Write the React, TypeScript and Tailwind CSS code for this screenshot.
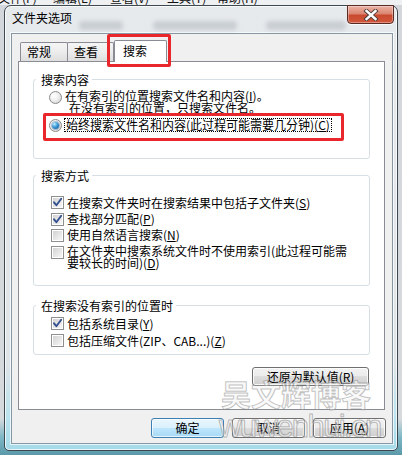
import React from "react";

const FONT = "font-['Noto_Sans_CJK_SC','Noto_Sans_CJK_JP',sans-serif]";

function Radio({ checked }: { checked?: boolean }) {
  return (
    <div className="w-[13px] h-[13px] shrink-0 rounded-full border border-[#8a8a8a] bg-[radial-gradient(circle_at_35%_35%,#ffffff_0%,#f2f2f2_40%,#cdcdcd_100%)] flex items-center justify-center">
      {checked && (
        <div className="w-[7px] h-[7px] rounded-full bg-[radial-gradient(circle_at_35%_30%,#c4f0ff_0%,#3a9ad9_45%,#0b4a88_100%)] shadow-[0_0_0_1px_rgba(30,80,140,0.35)]" />
      )}
    </div>
  );
}

function Check({ checked }: { checked?: boolean }) {
  return (
    <div className="relative w-[13px] h-[13px] shrink-0 border border-[#8e8f8f] bg-white p-px">
      <div className="w-full h-full bg-gradient-to-br from-[#d2d2d2] to-[#f7f7f7]" />
      {checked && (
        <svg className="absolute left-[-1px] top-[-1px]" width="13" height="13" viewBox="0 0 13 13">
          <path d="M3 6.3 L5.4 9.2 L10.2 2.8" fill="none" stroke="#34518f" strokeWidth="1.9" strokeLinejoin="round" strokeLinecap="round" />
        </svg>
      )}
    </div>
  );
}

function U({ c }: { c: string }) {
  return <span className="underline underline-offset-[1px]">{c}</span>;
}

export default function App() {
  return (
    <div className={`relative w-[402px] h-[455px] overflow-hidden ${FONT} text-[12px] text-black bg-[linear-gradient(to_bottom,#d3d7db_0%,#d6dadd_92%,#7fb8c6_96%,#5b99aa_100%)] flex flex-col`}>
      {/* menu bar strip behind */}
      <div className="h-[5px] overflow-hidden bg-[#eef0f2] shrink-0">
        <div className="flex -mt-[9px] leading-[14px] text-[12px] text-[#111]">
          <span className="ml-[-2px] w-[55px]">文件(F)</span>
          <span className="w-[57px]">编辑(E)</span>
          <span className="w-[57px]">查看(V)</span>
          <span className="w-[50px]">工具(T)</span>
          <span>帮助(H)</span>
        </div>
      </div>

      {/* window frame */}
      <div className="ml-[4px] w-[394px] h-[446px] shrink-0 rounded-t-[7px] rounded-b-[5px] border border-[#3e4851] bg-[linear-gradient(to_bottom,#e7eaed_0%,#e2e6e9_55%,#dfe4e7_80%,#b9e3ee_93%,#a6dbe9_100%)] shadow-[inset_0_0_0_1px_rgba(255,255,255,0.75)] flex flex-col">
        {/* title bar */}
        <div className="relative h-[27px] shrink-0 flex items-start">
          <div className="absolute left-[74px] top-[15px] w-[44px] h-[9px] rounded bg-[#9ea6ad]/40 blur-[2px]" />
          <div className="absolute left-[148px] top-[15px] w-[84px] h-[9px] rounded bg-[#9ea6ad]/40 blur-[2px]" />
          <div className="absolute left-[261px] top-[15px] w-[80px] h-[9px] rounded bg-[#9ea6ad]/40 blur-[2px]" />
          <div className="relative pl-[7px] pt-[4px] leading-[16px] text-[12px]">文件夹选项</div>
          <div className="flex-1" />
          <div className="relative -mt-px mr-[3px] w-[47px] h-[19px] rounded-b-[4px] border border-[#5b2a22] bg-[linear-gradient(to_bottom,#eab3a6_0%,#dc8670_45%,#c94a30_55%,#d2583b_100%)] shadow-[inset_0_0_0_1px_rgba(255,255,255,0.35),0_1px_0_rgba(255,255,255,0.8)] flex items-center justify-center">
            <svg width="16" height="12" viewBox="0 0 16 12">
              <path d="M3.5 2 L12.5 10 M12.5 2 L3.5 10" stroke="#4a3a3a" strokeWidth="4.2" strokeLinecap="square" />
              <path d="M3.5 2 L12.5 10 M12.5 2 L3.5 10" stroke="#ffffff" strokeWidth="2.4" strokeLinecap="square" />
            </svg>
          </div>
        </div>

        {/* client area */}
        <div className="ml-[6px] w-[382px] h-[411px] shrink-0 border border-[#8797a3] bg-[#f0f0f0] shadow-[0_0_0_1px_rgba(255,255,255,0.7)] flex flex-col">
          {/* tabs */}
          <div className="mt-[6px] ml-[8px] h-[21px] flex items-end shrink-0">
            <div className="w-[48px] h-[19px] border border-b-0 border-[#898c95] rounded-t-[2px] bg-[linear-gradient(to_bottom,#f5f5f5_0%,#ececec_50%,#dedede_100%)] pl-[6px] leading-[18px]">常规</div>
            <div className="ml-[-1px] w-[47px] h-[19px] border border-b-0 border-[#898c95] rounded-t-[2px] bg-[linear-gradient(to_bottom,#f5f5f5_0%,#ececec_50%,#dedede_100%)] pl-[6px] leading-[18px]">查看</div>
            <div className="relative z-10 mb-[-1px] w-[53px] h-[22px] border border-b-0 border-[#898c95] rounded-t-[2px] bg-white pl-[8px] leading-[20px]">
              搜索
              <div className="absolute left-[-8px] top-[-7px] w-[64px] h-[33px] border-[3px] border-[#e8262c] rounded-[2px]" />
            </div>
          </div>

          {/* panel */}
          <div className="ml-[6px] w-[367px] h-[349px] shrink-0 border border-[#898c95] bg-white px-[14px] flex flex-col">
            {/* group 1 */}
            <div className="mt-[17px] h-[80px] shrink-0 border border-[#d5dfe5] rounded-[3px] flex flex-col">
              <div className="-mt-[7px] ml-[2px] w-fit bg-white pl-[5px] pr-[3px] leading-[13px]">搜索内容</div>
              <div className="mt-[4px] pl-[15px] flex items-start">
                <div className="mt-[1px]"><Radio /></div>
                <div className="ml-[3px] leading-[12px]">
                  <div>在有索引的位置搜索文件名和内容(<U c="I" />)。</div>
                  <div className="pl-[4px]">在没有索引的位置，只搜索文件名。</div>
                </div>
              </div>
              <div className="relative mt-[4px] ml-[15px] h-[14px] flex items-center">
                <Radio checked />
                <div className="ml-[2px] border border-dotted border-black px-px leading-[12px]">始终搜索文件名和内容(此过程可能需要几分钟)(<U c="C" />)</div>
                <div className="absolute left-[-6px] top-[-5px] w-[301px] h-[28px] border-[3px] border-[#e8262c] rounded-[2px]" />
              </div>
            </div>

            {/* group 2 */}
            <div className="mt-[16px] h-[111px] shrink-0 border border-[#d5dfe5] rounded-[3px] flex flex-col">
              <div className="-mt-[7px] ml-[2px] w-fit bg-white pl-[5px] pr-[3px] leading-[13px]">搜索方式</div>
              <div className="mt-[12px] pl-[17px] h-[17px] flex items-center">
                <Check checked />
                <span className="ml-[3px]">在搜索文件夹时在搜索结果中包括子文件夹(<U c="S" />)</span>
              </div>
              <div className="pl-[17px] h-[16px] flex items-center">
                <Check checked />
                <span className="ml-[3px]">查找部分匹配(<U c="P" />)</span>
              </div>
              <div className="pl-[17px] h-[16px] flex items-center">
                <Check />
                <span className="ml-[3px]">使用自然语言搜索(<U c="N" />)</span>
              </div>
              <div className="pl-[17px] pt-[2px] flex items-start">
                <div className="mt-[1px]"><Check /></div>
                <div className="ml-[3px] leading-[12px]">
                  在文件夹中搜索系统文件时不使用索引(此过程可能需<br />要较长的时间)(<U c="D" />)
                </div>
              </div>
            </div>

            {/* group 3 */}
            <div className="mt-[19px] h-[50px] shrink-0 border border-[#d5dfe5] rounded-[3px] flex flex-col">
              <div className="-mt-[7px] ml-[2px] w-fit bg-white pl-[5px] pr-[3px] leading-[13px]">在搜索没有索引的位置时</div>
              <div className="mt-[3px] pl-[17px] h-[17px] flex items-center">
                <Check checked />
                <span className="ml-[3px]">包括系统目录(<U c="Y" />)</span>
              </div>
              <div className="pl-[17px] h-[17px] flex items-center">
                <Check />
                <span className="ml-[3px]">包括压缩文件(ZIP、CAB...)(<U c="Z" />)</span>
              </div>
            </div>

            <div className="mt-[12px] flex justify-end pr-px">
              <div className="w-[117px] h-[19px] rounded-[3px] border border-[#707070] bg-[linear-gradient(to_bottom,#f2f2f2_0%,#ebebeb_50%,#dddddd_50%,#cfcfcf_100%)] shadow-[inset_0_0_0_1px_rgba(255,255,255,0.8)] flex items-center justify-center leading-[14px]">
                还原为默认值(<U c="R" />)
              </div>
            </div>
          </div>

          {/* bottom buttons */}
          <div className="mt-[8px] pr-[6px] flex justify-end gap-[8px] shrink-0">
            <div className="w-[73px] h-[20px] rounded-[3px] border border-[#3c7fb1] bg-[linear-gradient(to_bottom,#eaf6fd_0%,#d9f0fc_50%,#bee6fd_50%,#a7d9f5_100%)] shadow-[inset_0_0_0_1px_rgba(255,255,255,0.7)] flex items-center justify-center leading-[14px]">确定</div>
            <div className="w-[73px] h-[20px] rounded-[3px] border border-[#707070] bg-[linear-gradient(to_bottom,#f2f2f2_0%,#ebebeb_50%,#dddddd_50%,#cfcfcf_100%)] shadow-[inset_0_0_0_1px_rgba(255,255,255,0.8)] flex items-center justify-center leading-[14px]">取消</div>
            <div className="w-[73px] h-[20px] rounded-[3px] border border-[#707070] bg-[linear-gradient(to_bottom,#f2f2f2_0%,#ebebeb_50%,#dddddd_50%,#cfcfcf_100%)] shadow-[inset_0_0_0_1px_rgba(255,255,255,0.8)] flex items-center justify-center leading-[14px]">应用(<U c="A" />)</div>
          </div>
        </div>
      </div>

      {/* watermark */}
      <div className="absolute left-[221px] top-[377px] z-20 pointer-events-none text-[30px] leading-[32px] font-bold text-[rgba(245,245,245,0.55)] [-webkit-text-stroke:1px_rgba(120,120,120,0.45)]">
        吴文辉博客
      </div>
      <div className="absolute left-[219px] top-[411px] z-20 pointer-events-none font-['Liberation_Sans',sans-serif] text-[31px] leading-[32px] tracking-[-1.6px] text-[rgba(245,245,245,0.5)] [-webkit-text-stroke:1px_rgba(110,110,110,0.45)]">
        wuwenhui.cn
      </div>
    </div>
  );
}
